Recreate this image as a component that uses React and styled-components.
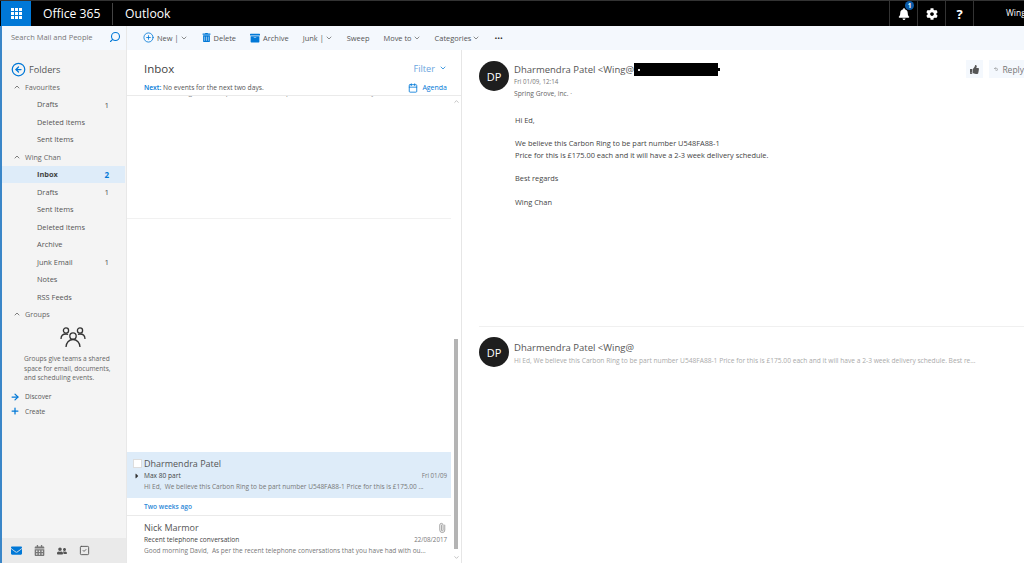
import styled, { createGlobalStyle } from 'styled-components';
import {
  ChevronDown,
  ChevronUp,
  CirclePlus,
  CircleArrowLeft,
  Search,
  ArrowRight,
  Plus,
  Paperclip,
  Calendar,
  SquareCheck,
} from 'lucide-react';
import { FaBell, FaCog, FaCaretRight, FaTrashAlt, FaArchive, FaEnvelope, FaCalendarAlt, FaUserFriends, FaThumbsUp } from 'react-icons/fa';
import { LuUndo2 } from 'react-icons/lu';

const GlobalStyle = createGlobalStyle`
  html, body {
    margin: 0;
    padding: 0;
    background: #fff;
    overflow: hidden;
  }
  body {
    font-family: "Open Sans", "Noto Sans", "Liberation Sans", sans-serif;
    color: #444;
  }
`;

const favourites = [
  { name: 'Drafts', count: 1 },
  { name: 'Deleted Items' },
  { name: 'Sent Items' },
];

const folders = [
  { name: 'Inbox', count: 2, active: true },
  { name: 'Drafts', count: 1 },
  { name: 'Sent Items' },
  { name: 'Deleted Items' },
  { name: 'Archive' },
  { name: 'Junk Email', count: 1 },
  { name: 'Notes' },
  { name: 'RSS Feeds' },
];

const body = [
  ['Hi Ed,'],
  [
    'We believe this Carbon Ring to be part number U548FA88-1',
    'Price for this is £175.00 each and it will have a 2-3 week delivery schedule.',
  ],
  ['Best regards'],
  ['Wing Chan'],
];

const GroupsIcon = () => (
  <svg width="26" height="22" viewBox="0 0 26 22" fill="none" stroke="#333" strokeWidth="1.3">
    <circle cx="6" cy="4.5" r="2.6" />
    <circle cx="20" cy="4.5" r="2.6" />
    <circle cx="13" cy="10" r="3.2" />
    <path d="M1 13c0-3 2-5 5-5 .8 0 1.5.2 2 .5M25 13c0-3-2-5-5-5-.8 0-1.5.2-2 .5M6 21c0-4 3-7.5 7-7.5s7 3.500 7 7.500" />
  </svg>
);

const Waffle = () => (
  <svg width="11" height="11" viewBox="0 0 11 11" fill="#fff">
    {[0, 4, 8].map((y) =>
      [0, 4, 8].map((x) => <rect key={`${x}-${y}`} x={x} y={y} width="3" height="3" />)
    )}
  </svg>
);

const FolderRow = ({ name, count, active }) => (
  <Folder $active={active}>
    <span>{name}</span>
    {count && <Count $active={active}>{count}</Count>}
  </Folder>
);

const App = () => {
  return (
    <Page>
      <GlobalStyle />
      <TopBar>
        <WaffleButton>
          <Waffle />
        </WaffleButton>
        <Brand>Office 365</Brand>
        <AppName>Outlook</AppName>
        <TopActions>
          <TopAction>
            <FaBell size={12} color="#fff" />
            <Badge>1</Badge>
          </TopAction>
          <TopAction>
            <FaCog size={12} color="#fff" />
          </TopAction>
          <TopAction>
            <Help>?</Help>
          </TopAction>
          <UserName>Wing</UserName>
        </TopActions>
      </TopBar>

      <Main>
        <Sidebar>
          <SearchBox>
            <SearchText>Search Mail and People</SearchText>
            <SearchIcon size={12} color="#0078d7" strokeWidth={2.2} />
          </SearchBox>
          <FolderNav>
            <FoldersTitle>
              <CircleArrowLeft size={15} color="#0078d7" strokeWidth={2} />
              Folders
            </FoldersTitle>
            <SectionTitle>
              <ChevronUp size={8} strokeWidth={2.5} />
              Favourites
            </SectionTitle>
            {favourites.map((f) => (
              <FolderRow key={f.name} {...f} />
            ))}
            <SectionTitle>
              <ChevronUp size={8} strokeWidth={2.5} />
              Wing Chan
            </SectionTitle>
            {folders.map((f) => (
              <FolderRow key={f.name} {...f} />
            ))}
            <SectionTitle>
              <ChevronUp size={8} strokeWidth={2.5} />
              Groups
            </SectionTitle>
            <GroupsPromo>
              <GroupsIcon />
              <PromoText>Groups give teams a shared space for email, documents, and scheduling events.</PromoText>
            </GroupsPromo>
            <GroupLink>
              <ArrowRight size={10} color="#0078d7" strokeWidth={3} />
              Discover
            </GroupLink>
            <GroupLink>
              <Plus size={10} color="#0078d7" strokeWidth={3} />
              Create
            </GroupLink>
          </FolderNav>
          <ModuleBar>
            <FaEnvelope size={11} color="#0078d7" />
            <FaCalendarAlt size={11} color="#777" />
            <FaUserFriends size={10} color="#555" />
            <SquareCheck size={11} color="#555" strokeWidth={2} />
          </ModuleBar>
        </Sidebar>

        <Workspace>
          <Toolbar>
            <ToolItem>
              <CirclePlus size={11} color="#0078d7" strokeWidth={1.8} />
              New |
              <ToolChevron size={8} strokeWidth={2} />
            </ToolItem>
            <ToolItem>
              <FaTrashAlt size={9} color="#0078d7" />
              Delete
            </ToolItem>
            <ToolItem>
              <FaArchive size={10} color="#0078d7" />
              Archive
            </ToolItem>
            <ToolItem>
              Junk |
              <ToolChevron size={8} strokeWidth={2} />
            </ToolItem>
            <ToolItem>Sweep</ToolItem>
            <ToolItem>
              Move to
              <ToolChevron size={8} strokeWidth={2} />
            </ToolItem>
            <ToolItem>
              Categories
              <ToolChevron size={8} strokeWidth={2} />
            </ToolItem>
            <Dots>•••</Dots>
          </Toolbar>

          <Panes>
            <ListPane>
              <ListHeader>
                <HeaderRow>
                  <ListTitle>Inbox</ListTitle>
                  <FilterLink>
                    Filter
                    <ChevronDown size={8} color="#0078d7" strokeWidth={2.2} />
                  </FilterLink>
                </HeaderRow>
                <NextRow>
                  <span>
                    <NextLabel>Next:</NextLabel> No events for the next two days.
                  </span>
                  <AgendaLink>
                    <Calendar size={10} strokeWidth={2} />
                    Agenda
                  </AgendaLink>
                </NextRow>
              </ListHeader>
              <ListBody>
                <MessageScroll>
                  <ClippedLine>Good morning David, As per the recent telephone conversations that you have had</ClippedLine>
                  <EmptyArea>
                    <FaintRule />
                  </EmptyArea>
                  <MessageRow $selected>
                    <Checkbox />
                    <Sender>Dharmendra Patel</Sender>
                    <SubjectRow>
                      <Caret>
                        <FaCaretRight size={8} color="#333" />
                      </Caret>
                      <Subject>Max 80 part</Subject>
                      <MessageDate>Fri 01/09</MessageDate>
                    </SubjectRow>
                    <Preview>Hi Ed,&nbsp; We believe this Carbon Ring to be part number U548FA88-1 Price for this is £175.00 ...</Preview>
                  </MessageRow>
                  <GroupHeading>Two weeks ago</GroupHeading>
                  <MessageRow>
                    <SenderLine>
                      <Sender>Nick Marmor</Sender>
                      <ClipIcon size={10} color="#999" />
                    </SenderLine>
                    <SubjectRow>
                      <Subject>Recent telephone conversation</Subject>
                      <MessageDate>22/08/2017</MessageDate>
                    </SubjectRow>
                    <Preview>Good morning David,&nbsp; As per the recent telephone conversations that you have had with ou...</Preview>
                  </MessageRow>
                </MessageScroll>
                <ScrollTrack>
                  <ChevronUp size={7} color="#bbb" strokeWidth={3} />
                  <ScrollThumb />
                  <ChevronDown size={7} color="#bbb" strokeWidth={3} />
                </ScrollTrack>
              </ListBody>
            </ListPane>

            <ReadingPane>
              <MailHeader>
                <Avatar>DP</Avatar>
                <HeaderText>
                  <FromLine>
                    Dharmendra Patel &lt;Wing@
                    <Redacted>
                      <RedactedDot />
                    </Redacted>
                  </FromLine>
                  <MailDate>Fri 01/09, 12:14</MailDate>
                  <Company>Spring Grove, inc. ·</Company>
                </HeaderText>
                <MailActions>
                  <ActionButton>
                    <FaThumbsUp size={9} color="#555" />
                  </ActionButton>
                  <ActionButton $wide>
                    <LuUndo2 size={10} color="#555" />
                    Reply
                  </ActionButton>
                </MailActions>
              </MailHeader>
              <MailBody>
                {body.map((lines) => (
                  <Paragraph key={lines[0]}>
                    {lines.map((line) => (
                      <div key={line}>{line}</div>
                    ))}
                  </Paragraph>
                ))}
              </MailBody>
              <ThreadItem>
                <Avatar>DP</Avatar>
                <ThreadText>
                  <FromLine>Dharmendra Patel &lt;Wing@</FromLine>
                  <ThreadPreview>
                    Hi Ed, We believe this Carbon Ring to be part number U548FA88-1 Price for this is £175.00 each and it will have a 2-3 week delivery schedule. Best re...
                  </ThreadPreview>
                </ThreadText>
              </ThreadItem>
            </ReadingPane>
          </Panes>
        </Workspace>
      </Main>
    </Page>
  );
};

const Page = styled.div`
  width: 1024px;
  height: 563px;
  display: flex;
  flex-direction: column;
  overflow: hidden;
`;

const TopBar = styled.header`
  height: 26px;
  flex: none;
  display: flex;
  align-items: center;
  background: #000;
  border-top: 1px solid #333;
  box-sizing: border-box;
  color: #fff;
`;

const WaffleButton = styled.div`
  width: 30px;
  height: 100%;
  margin-left: 1px;
  background: #0078d7;
  display: flex;
  align-items: center;
  justify-content: center;
`;

const Brand = styled.div`
  width: 82px;
  padding-left: 12px;
  font-size: 12.2px;
  border-right: 1px solid #444;
  line-height: 22px;
  box-sizing: border-box;
  height: 22px;
`;

const AppName = styled.div`
  padding-left: 12px;
  font-size: 12.2px;
`;

const TopActions = styled.div`
  margin-left: auto;
  height: 100%;
  display: flex;
  align-items: stretch;
`;

const TopAction = styled.div`
  position: relative;
  width: 28px;
  border-left: 1px solid #333;
  display: flex;
  align-items: center;
  justify-content: center;
  box-sizing: border-box;
`;

const Badge = styled.span`
  position: absolute;
  top: 0;
  left: 15px;
  width: 9px;
  height: 9px;
  border-radius: 50%;
  background: #0a5aa8;
  font-size: 6.5px;
  font-weight: 700;
  line-height: 9px;
  text-align: center;
`;

const Help = styled.span`
  font-size: 13px;
  font-weight: 700;
`;

const UserName = styled.div`
  width: 51px;
  box-sizing: border-box;
  border-left: 1px solid #333;
  padding-left: 32px;
  font-size: 8.5px;
  line-height: 24px;
  white-space: nowrap;
`;

const Main = styled.div`
  flex: 1;
  min-height: 0;
  display: flex;
`;

const Sidebar = styled.aside`
  width: 127px;
  flex: none;
  box-sizing: border-box;
  display: flex;
  flex-direction: column;
  background: #f4f4f4;
  border-left: 2px solid #3a86c8;
  border-right: 1px solid #e8e8e8;
`;

const SearchBox = styled.div`
  height: 24px;
  flex: none;
  box-sizing: border-box;
  display: flex;
  align-items: center;
  justify-content: space-between;
  padding: 0 5px 3px 9px;
  background: #f4f8fd;
`;

const SearchText = styled.span`
  font-size: 7.5px;
  color: #777;
`;

const SearchIcon = styled(Search)`
  transform: scaleX(-1);
`;

const FolderNav = styled.nav`
  flex: 1;
  min-height: 0;
  padding-top: 10px;
`;

const FoldersTitle = styled.div`
  height: 19px;
  display: flex;
  align-items: center;
  gap: 3px;
  padding-left: 9px;
  font-size: 9.2px;
  color: #555;
  margin-bottom: -1px;
`;

const SectionTitle = styled.div`
  height: 17.5px;
  display: flex;
  align-items: center;
  gap: 4px;
  padding-left: 11px;
  font-size: 7.2px;
  color: #666;
`;

const Folder = styled.div`
  height: 17.5px;
  display: flex;
  align-items: center;
  justify-content: space-between;
  padding: 0 16px 0 35px;
  margin-right: 1px;
  font-size: 7.4px;
  color: #555;
  ${(p) => p.$active && 'background: #deecf9; font-weight: 700; color: #444;'}
`;

const Count = styled.span`
  font-size: 8px;
  color: ${(p) => (p.$active ? '#0078d7' : '#555')};
`;

const GroupsPromo = styled.div`
  display: flex;
  flex-direction: column;
  align-items: center;
  gap: 6px;
  padding: 3px 4px 0 22px;
  margin-bottom: 7px;
`;

const PromoText = styled.div`
  width: 100%;
  font-size: 6.6px;
  line-height: 9.5px;
  color: #666;
`;

const GroupLink = styled.div`
  height: 14.5px;
  display: flex;
  align-items: center;
  gap: 5px;
  padding-left: 8px;
  font-size: 6.6px;
  color: #555;
`;

const ModuleBar = styled.div`
  height: 25px;
  flex: none;
  display: flex;
  align-items: center;
  gap: 12px;
  padding-left: 9px;
  background: #eaeaea;
`;

const Workspace = styled.div`
  flex: 1;
  min-width: 0;
  display: flex;
  flex-direction: column;
`;

const Toolbar = styled.div`
  height: 24px;
  flex: none;
  box-sizing: border-box;
  display: flex;
  align-items: center;
  gap: 14px;
  padding: 0 0 1px 16px;
  background: #f4f8fd;
`;

const ToolItem = styled.div`
  display: flex;
  align-items: center;
  gap: 3px;
  font-size: 7.45px;
  color: #555;
  white-space: nowrap;
`;

const ToolChevron = styled(ChevronDown)`
  margin-left: -2px;
`;

const Dots = styled.span`
  font-size: 7.5px;
  color: #333;
`;

const Panes = styled.div`
  flex: 1;
  min-height: 0;
  display: flex;
`;

const ListPane = styled.section`
  width: 335px;
  flex: none;
  display: flex;
  flex-direction: column;
  box-sizing: border-box;
  border-right: 1px solid #e6e6e6;
`;

const ListHeader = styled.div`
  height: 46px;
  flex: none;
  box-sizing: border-box;
  padding: 8px 14px 0 17px;
  border-bottom: 1px solid #eaeaea;
`;

const HeaderRow = styled.div`
  height: 20px;
  display: flex;
  align-items: center;
  justify-content: space-between;
`;

const ListTitle = styled.div`
  font-size: 11.5px;
  color: #444;
`;

const FilterLink = styled.div`
  display: flex;
  align-items: center;
  gap: 4px;
  font-size: 9.2px;
  color: #6aa5de;
`;

const NextRow = styled.div`
  height: 15px;
  margin-top: 2px;
  display: flex;
  align-items: center;
  justify-content: space-between;
  font-size: 6.7px;
  color: #555;
`;

const NextLabel = styled.span`
  color: #0078d7;
  font-weight: 600;
`;

const AgendaLink = styled.div`
  display: flex;
  align-items: center;
  gap: 4px;
  color: #0078d7;
  font-size: 7px;
`;

const ListBody = styled.div`
  flex: 1;
  min-height: 0;
  display: flex;
`;

const MessageScroll = styled.div`
  flex: 1;
  min-width: 0;
  display: flex;
  flex-direction: column;
  padding-bottom: 2px;
`;

const ClippedLine = styled.div`
  height: 2px;
  flex: none;
  padding-left: 18px;
  overflow: hidden;
  display: flex;
  align-items: flex-end;
  font-size: 7px;
  line-height: 10px;
  color: #888;
  white-space: nowrap;
`;

const EmptyArea = styled.div`
  flex: 1;
  padding-top: 120px;
`;

const FaintRule = styled.div`
  height: 1px;
  background: #f1f1f1;
`;

const MessageRow = styled.div`
  position: relative;
  height: ${(p) => (p.$selected ? '46px' : '45px')};
  box-sizing: border-box;
  padding: 5px 4px 0 17px;
  background: ${(p) => (p.$selected ? '#deecf9' : 'transparent')};
`;

const Checkbox = styled.span`
  position: absolute;
  left: 6px;
  top: 7px;
  width: 7px;
  height: 7px;
  background: #fff;
  border: 1px solid #ddd;
`;

const Caret = styled.span`
  position: absolute;
  left: 6px;
  display: flex;
`;

const Sender = styled.div`
  font-size: 9px;
  line-height: 13px;
  color: #555;
`;

const SenderLine = styled.div`
  display: flex;
  align-items: center;
  justify-content: space-between;
`;

const ClipIcon = styled(Paperclip)`
  transform: rotate(-45deg);
`;

const SubjectRow = styled.div`
  display: flex;
  align-items: center;
  justify-content: space-between;
  height: 11px;
`;

const Subject = styled.div`
  font-size: 6.6px;
  color: #444;
`;

const MessageDate = styled.div`
  font-size: 6.2px;
  color: #777;
`;

const Preview = styled.div`
  font-size: 6.5px;
  line-height: 12px;
  color: #777;
  white-space: nowrap;
  overflow: hidden;
`;

const GroupHeading = styled.div`
  height: 18px;
  flex: none;
  box-sizing: border-box;
  padding-left: 17px;
  font-size: 6.6px;
  font-weight: 600;
  line-height: 18px;
  color: #2b88d8;
  border-bottom: 1px solid #eaeaea;
`;

const ScrollTrack = styled.div`
  width: 10px;
  flex: none;
  display: flex;
  flex-direction: column;
  align-items: center;
  justify-content: space-between;
  padding: 2px 0 2px;
  box-sizing: border-box;
`;

const ScrollThumb = styled.div`
  width: 4px;
  height: 210px;
  margin-top: auto;
  margin-bottom: 5px;
  background: #b4b4b4;
`;

const ReadingPane = styled.section`
  flex: 1;
  min-width: 0;
  padding-left: 17px;
  display: flex;
  flex-direction: column;
`;

const MailHeader = styled.div`
  display: flex;
  padding-top: 11px;
  gap: 5px;
`;

const Avatar = styled.div`
  width: 30px;
  height: 30px;
  flex: none;
  border-radius: 50%;
  background: #1e1e1e;
  color: #fff;
  font-size: 11px;
  display: flex;
  align-items: center;
  justify-content: center;
`;

const HeaderText = styled.div`
  min-width: 0;
  flex: 1;
  padding-top: 1px;
`;

const ThreadText = styled(HeaderText)`
  padding-top: 3px;
`;

const FromLine = styled.div`
  display: flex;
  align-items: center;
  height: 15px;
  font-size: 9.5px;
  color: #555;
  white-space: pre;
`;

const Redacted = styled.span`
  position: relative;
  width: 84px;
  height: 13px;
  background: #000;
  display: flex;
  align-items: center;
  padding-left: 4px;
  box-sizing: border-box;

  &::after {
    content: '';
    position: absolute;
    right: -2px;
    top: 5px;
    width: 2px;
    height: 3px;
    background: #000;
  }
`;

const RedactedDot = styled.span`
  width: 2px;
  height: 2px;
  background: #ddd;
`;

const MailDate = styled.div`
  font-size: 6.2px;
  line-height: 10px;
  color: #777;
`;

const Company = styled.div`
  margin-top: 2px;
  font-size: 6.7px;
  line-height: 10px;
  color: #666;
`;

const MailActions = styled.div`
  flex: none;
  width: 58px;
  margin-top: -1px;
  display: flex;
  align-items: flex-start;
  gap: 6px;
  overflow: hidden;
`;

const ActionButton = styled.div`
  height: 18px;
  width: ${(p) => (p.$wide ? '35px' : '17px')};
  flex: none;
  box-sizing: border-box;
  display: flex;
  align-items: center;
  justify-content: ${(p) => (p.$wide ? 'flex-start' : 'center')};
  gap: 4px;
  padding-left: ${(p) => (p.$wide ? '5px' : '0')};
  background: #f4f8fd;
  font-size: 8.5px;
  color: #777;
  white-space: nowrap;
  overflow: hidden;
`;

const MailBody = styled.div`
  height: 227px;
  flex: none;
  box-sizing: border-box;
  padding: 16px 0 0 36px;
  font-size: 7.4px;
  line-height: 11.7px;
  color: #444;
`;

const Paragraph = styled.div`
  margin-bottom: 11.7px;
`;

const ThreadItem = styled.div`
  display: flex;
  gap: 5px;
  padding-top: 10px;
  border-top: 1px solid #f0f0f0;
`;

const ThreadPreview = styled.div`
  font-size: 6.65px;
  line-height: 11px;
  color: #aaa;
  white-space: nowrap;
`;

export default App;
